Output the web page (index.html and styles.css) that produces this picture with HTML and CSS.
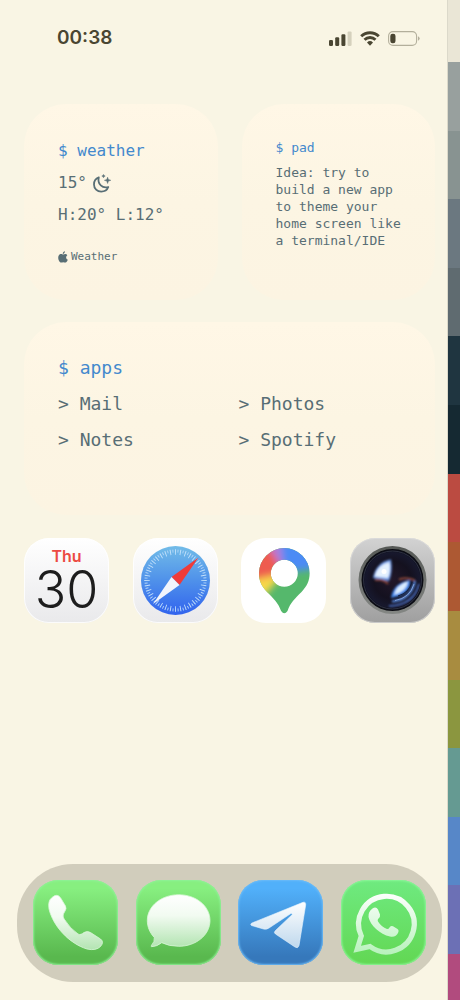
FILE: index.html
```html
<!DOCTYPE html>
<html lang="en">
<head>
<meta charset="utf-8">
<meta name="viewport" content="width=device-width, initial-scale=1">
<title>Home screen</title>
<link rel="stylesheet" href="styles.css">
</head>
<body>
<main class="screen">
  <header class="status">
    <time class="clock">00:38</time>
    <div class="indicators">
      <svg width="23" height="15" viewBox="0 0 23 15" role="img" aria-label="Signal">
        <g fill="#4a4632"><rect x="0" y="9" width="4" height="6" rx="1.2"/><rect x="6.2" y="6.3" width="4" height="8.7" rx="1.2"/><rect x="12.4" y="3.2" width="4" height="11.800" rx="1.2"/></g>
        <rect x="18.6" y="0.4" width="4" height="14.6" rx="1.2" fill="#d5d1bd"/>
      </svg>
      <svg width="20" height="15" viewBox="0 0 20 15" role="img" aria-label="Wi-Fi">
        <g fill="none" stroke="#4a4632" stroke-width="2.900"><path d="M1.200 5.300a12.500 12.500 0 0 1 17.600 0"/><path d="M4.500 8.800a7.900 7.900 0 0 1 11 0"/></g>
        <path d="M7 11.500a4.300 4.300 0 0 1 6 0L10 14.700z" fill="#4a4632"/>
      </svg>
      <svg width="32" height="15" viewBox="0 0 32 15" role="img" aria-label="Battery">
        <rect x="0.6" y="0.6" width="28" height="13.8" rx="4.4" fill="none" stroke="#b3af9b" stroke-width="1.1"/>
        <path d="M30 5.3q1.7.7 1.7 2.2T30 9.7z" fill="#b3af9b"/>
        <rect x="2.3" y="2.8" width="5.2" height="9.4" rx="2.3" fill="#4a4632"/>
      </svg>
    </div>
  </header>

  <section class="widgets">
    <article class="widget weather">
      <h2 class="prompt">$ weather</h2>
      <p class="now">15°
        <svg width="19" height="19" viewBox="0 0 19 19" aria-hidden="true">
          <path d="M5.800 3.400C2.800 4.500 1 7.200 1 10.400 1 14.600 4.200 17.600 8.200 17.600 11.500 17.600 14.200 15.900 15.300 13 9.500 14.600 4.200 10.500 5.800 3.400z" fill="none" stroke="#586e75" stroke-width="1.800" stroke-linejoin="round"/>
          <path d="M14.600 3.200l.8 2.300 2.400.8-2.400.8-.8 2.400-.8-2.400-2.400-.8 2.400-.8zM10.500.4l.5 1.200 1.200.5-1.200.5-.5 1.200-.5-1.200-1.200-.5 1.200-.5z" fill="#586e75" stroke="#586e75" stroke-width=".5"/>
        </svg>
      </p>
      <p>H:20° L:12°</p>
      <footer class="source">
        <svg width="10" height="12" viewBox="0 0 10 12" aria-hidden="true"><path fill="#586e75" d="M7 .2C7 1.6 6 2.8 4.800 2.900 4.700 1.500 5.800.4 7 .2zM9.300 4.200Q8.100 5 8.100 6.400 8.200 8 9.800 8.700 9.200 10.200 8.200 11.200C7.200 12.100 6.300 11.200 5.200 11.200S3.400 11.900 2.500 11.400C1.200 10.700.2 8.700.2 6.700.2 4.200 1.700 3 3.200 3 4.100 3 4.600 3.500 5.200 3.500S6.500 3 7.400 3Q8.600 3.100 9.300 4.200z"/></svg>
        <span>Weather</span>
      </footer>
    </article>
    <article class="widget pad">
      <h2 class="prompt">$ pad</h2>
      <p>Idea: try to<br>build a new app<br>to theme your<br>home screen like<br>a terminal/IDE</p>
    </article>
    <nav class="widget apps" aria-label="Apps">
      <h2 class="prompt">$ apps</h2>
      <a href="#mail">&gt; Mail</a>
      <a href="#photos">&gt; Photos</a>
      <a href="#notes">&gt; Notes</a>
      <a href="#spotify">&gt; Spotify</a>
    </nav>
  </section>

  <section class="icons">
    <button class="app calendar" aria-label="Calendar">
      <span class="weekday">Thu</span>
      <span class="day">30</span>
    </button>
    <button class="app safari" aria-label="Safari">
      <svg viewBox="0 0 85 85" aria-hidden="true">
        <defs><linearGradient id="sea" x2="0" y2="1"><stop stop-color="#72bce8"/><stop offset=".5" stop-color="#4f91ea"/><stop offset="1" stop-color="#3163ee"/></linearGradient></defs>
        <circle cx="42.500" cy="42.500" r="34.500" fill="url(#sea)"/>
        <circle cx="42.500" cy="42.500" r="28.500" fill="none" stroke="#c5e2fb" stroke-width="5.500" pathLength="360" stroke-dasharray="1.800 8.200" stroke-dashoffset="1"/>
        <circle cx="42.500" cy="42.500" r="29.500" fill="none" stroke="#b3d5f8" stroke-width="3" pathLength="360" stroke-dasharray="1.800 8.200" stroke-dashoffset="6"/>
        <path d="M65.500 19.500L38.500 39l8 8z" fill="#ef3b39"/>
        <path d="M20 66L38.500 39l8 8z" fill="#f2f5fc"/>
      </svg>
    </button>
    <button class="app maps" aria-label="Maps">
      <svg viewBox="0 0 85 85" aria-hidden="true">
        <defs>
          <clipPath id="pin"><path clip-rule="evenodd" d="M43.300 10A25.300 25.300 0 0 1 68.600 35.300C68.600 43 66 48 60.500 54 54 60.500 49.500 64.500 46.500 73Q43.300 77.500 40.100 73C37 64.500 32.500 60.500 26 54 20.500 48 18 43 18 35.300A25.300 25.300 0 0 1 43.300 10zM43.300 21.800a13.500 13.500 0 1 0 0 27 13.500 13.500 0 0 0 0-27z"/></clipPath>
          <filter id="blend" x="-50%" y="-50%" width="200%" height="200%"><feGaussianBlur stdDeviation="3.500"/></filter>
        </defs>
        <g clip-path="url(#pin)">
          <path d="M10 5h65v75H10z" fill="#55b86c"/>
          <g filter="url(#blend)">
            <path d="M43 35L4 40l16 22z" fill="#f8d84a"/>
            <path d="M43 35L4 44 4 14 26 4z" fill="#ee5b50"/>
            <path d="M43 35L24 2h17z" fill="#b27bd8"/>
            <path d="M43 35L39 0h41v30z" fill="#4c8bf5"/>
          </g>
        </g>
      </svg>
    </button>
    <button class="app camera" aria-label="Camera">
      <svg viewBox="0 0 85 85" aria-hidden="true">
        <defs>
          <radialGradient id="glass"><stop stop-color="#211729"/><stop offset=".6" stop-color="#14111f"/><stop offset=".88" stop-color="#17182d"/><stop offset="1" stop-color="#07080d"/></radialGradient>
          <linearGradient id="rim" x2="0" y2="1"><stop stop-color="#555855"/><stop offset="1" stop-color="#848784"/></linearGradient>
          <filter id="soft" x="-50%" y="-50%" width="200%" height="200%"><feGaussianBlur stdDeviation=".9"/></filter>
          <clipPath id="lens"><circle cx="42.500" cy="42" r="28"/></clipPath>
        </defs>
        <circle cx="42.500" cy="42" r="34" fill="url(#rim)"/>
        <circle cx="42.500" cy="42" r="31" fill="url(#glass)"/>
        <circle cx="42.500" cy="42" r="29" fill="none" stroke="#3b3f50" stroke-width=".7"/>
        <g clip-path="url(#lens)">
          <g filter="url(#soft)">
            <path d="M41 21.500Q26 24 23 40l16 3q4-9 2-21.500z" fill="#6f9be8"/>
            <path d="M39.500 24Q27 27 24.500 38.500L38 40q3-7 1.500-16z" fill="#e4f1ff"/>
            <path d="M25 42q9-1 13 4" fill="none" stroke="#8f4638" stroke-width="2"/>
            <path d="M41 60Q43 45 60 42q2 14-19 18z" fill="#4389ee"/>
            <path d="M44 57q2-10 14-14-1 10-14 14z" fill="#dceeff"/>
            <path d="M49 41.500q8-3 16 1" fill="none" stroke="#a9553f" stroke-width="1.500"/>
            <path d="M42 63.500Q61 62 65 43" fill="none" stroke="#5b92ee" stroke-width="2"/>
            <path d="M39 68Q64 67 69 46" fill="none" stroke="#4f76cc" stroke-width="1.500"/>
          </g>
          <path d="M48 58Q59 55 62 44" fill="none" stroke="#15203f" stroke-width="1"/>
          <path d="M45 62.500Q60 60 64 46" fill="none" stroke="#a9cbff" stroke-width=".6"/>
          <circle cx="34" cy="33.500" r="2.500" fill="#fff"/>
        </g>
      </svg>
    </button>
  </section>

  <nav class="dock" aria-label="Dock">
    <button class="app green" aria-label="Phone">
      <svg viewBox="0 0 85 85" aria-hidden="true">
        <defs><linearGradient id="frost" x2="0" y2="1"><stop stop-color="#fff"/><stop offset=".4" stop-color="#f2fbf1"/><stop offset="1" stop-color="#b3e4b2"/></linearGradient></defs>
        <path d="M19 17.500Q24.500 12.500 28 18.500L32.500 26Q34 28.500 31.500 32C29.500 35 30 37 31.500 39.500Q37 48.500 45 54C47 55.300 49 54 51 52.500Q54.500 50.500 57.500 52.500L67.500 59Q71.500 62 67.500 66.500 63 71 54 69C36 63.500 20 46 16 29Q14.500 21 19 17.500z" fill="url(#frost)" stroke="#dbf7d9" stroke-width=".8"/>
      </svg>
    </button>
    <button class="app green" aria-label="Messages">
      <svg viewBox="0 0 85 85" aria-hidden="true">
        <path d="M42.700 14.700C60 14.700 74 26 74 40.500S60 66.300 42.700 66.300Q33 66.300 25.700 62.700 21 66.500 15.500 66.700 14.700 66.300 15.500 65.300 19 61.500 18.300 57.500C14 53 11.300 47 11.300 40.500 11.300 26 25.500 14.700 42.700 14.700z" fill="url(#frost)" stroke="#d9f8d8" stroke-width=".8"/>
      </svg>
    </button>
    <button class="app telegram" aria-label="Telegram">
      <svg viewBox="0 0 85 85" aria-hidden="true">
        <defs><linearGradient id="plane" x2="0" y2="1"><stop stop-color="#fff"/><stop offset="1" stop-color="#bfd8ed"/></linearGradient></defs>
        <path d="M13.500 43.200L65 22.300Q68 21.500 67.700 25L61 65.500Q60 69 57 67L37.500 54Q35.300 52.500 37.500 50.500L54.300 34.500Q54 33 52.500 33.800L31 48Q28.500 49.800 25.500 49L13.500 45.500Q12 44.500 13.500 43.200z" fill="url(#plane)" stroke="#e7f5ff" stroke-width=".6"/>
      </svg>
    </button>
    <button class="app whatsapp" aria-label="WhatsApp">
      <svg viewBox="0 0 85 85" aria-hidden="true">
        <defs><linearGradient id="mint" gradientUnits="userSpaceOnUse" x1="0" y1="12" x2="0" y2="73"><stop stop-color="#fff"/><stop offset="1" stop-color="#b9f2bd"/></linearGradient></defs>
        <path d="M16.200 69.200L20.300 56A27.800 27.800 0 1 1 29 66.500z" fill="none" stroke="url(#mint)" stroke-width="5.200"/>
        <path d="M31.500 28.500Q35 26 37 29.500L39 34.500Q39.500 36.500 37.500 38.500 36 40 37 41.500 40.500 47 46 49 47.500 49.300 48.500 47.500 50 45.500 52 46.300L56.500 49Q58.300 50.200 57 53 55 57.500 49 56.500C39 54.500 29 45 27.500 37Q27 31.500 31.500 28.500z" fill="url(#mint)"/>
      </svg>
    </button>
  </nav>
</main>
<div class="palette" aria-hidden="true">
  <i class="swatch base3"></i><i class="swatch base1"></i><i class="swatch base0"></i><i class="swatch base00"></i><i class="swatch base01"></i><i class="swatch base02"></i><i class="swatch base03"></i><i class="swatch red"></i><i class="swatch orange"></i><i class="swatch yellow"></i><i class="swatch lime"></i><i class="swatch cyan"></i><i class="swatch blue"></i><i class="swatch violet"></i><i class="swatch magenta"></i>
</div>
</body>
</html>
```
FILE: styles.css
```css
* { box-sizing: border-box; }
body {
  margin: 0;
  min-height: 100vh;
  display: grid;
  grid-template-columns: 1fr 13px;
  background: #f9f5e4;
  color: #586e75;
  font-family: "DejaVu Sans Mono", monospace;
}
h2, p { margin: 0; font: inherit; }
svg { display: block; }
a { color: inherit; text-decoration: none; }
button { border: 0; padding: 0; font: inherit; cursor: pointer; }

.screen { display: flex; flex-direction: column; min-width: 0; }

.status {
  display: flex;
  justify-content: space-between;
  align-items: center;
  height: 76px;
  padding: 0 27px 0 57px;
  color: #4a4632;
}
.clock { font: 600 19px/24px Inter, sans-serif; }
.indicators { display: flex; gap: 8px; }

.widgets {
  display: grid;
  grid-template-columns: 1fr 1fr;
  gap: 22px 24px;
  padding: 28px 12px 0 24px;
}
.widget {
  border-radius: 42px;
  background: linear-gradient(#fff7e6, #fcf5e3 50%, #fcf4e2);
}
.prompt { color: #4389cd; }

.weather {
  min-height: 196px;
  padding: 31px 0 0 34px;
  font-size: 16px;
  line-height: 32px;
}
.now { display: flex; align-items: center; gap: 6px; }
.source {
  display: flex;
  align-items: center;
  gap: 3px;
  margin-top: 18px;
  font-size: 11px;
  line-height: 16px;
}

.pad {
  padding: 35px 0 0 34px;
  font-size: 13px;
  line-height: 17px;
  white-space: nowrap;
}
.pad .prompt { margin-bottom: 8px; }

.apps {
  grid-column: 1 / -1;
  display: grid;
  grid-template-columns: 1fr 1fr;
  align-content: start;
  min-height: 193px;
  padding: 28px 16px 0 34px;
  font-size: 18px;
  line-height: 36px;
}
.apps .prompt { grid-column: 1 / -1; }

.icons {
  display: flex;
  justify-content: space-between;
  padding: 23px 12px 24px 24px;
}
.app {
  width: 85px;
  height: 85px;
  border-radius: 25px;
  overflow: hidden;
}
.calendar, .safari {
  background: linear-gradient(#fff, #e9e9eb);
  box-shadow: inset 0 0 0 1px #ffffffcc;
}
.calendar {
  display: flex;
  flex-direction: column;
  align-items: center;
  justify-content: center;
  font-family: Inter, sans-serif;
}
.weekday { color: #ec4a43; font-size: 16px; font-weight: 600; line-height: 18px; }
.day { color: #1d1d1d; font-size: 52px; font-weight: 300; line-height: 49px; }
.maps { background: #fff; }
.camera {
  background: linear-gradient(#d2d2d2, #9f9f9f);
  box-shadow: inset 0 0 0 1px #dededeaa;
}

.dock {
  display: flex;
  justify-content: space-between;
  margin: auto 5px 18px 17px;
  padding: 16px 16px 17px;
  border-radius: 56px;
  background: #d1cdbc;
}
.green {
  background: linear-gradient(#87ef80 10%, #59b84e 90%);
  box-shadow: inset 0 0 2px 1px #8ff298;
}
.telegram {
  background: linear-gradient(#51b0fa 10%, #3678bb 90%);
  box-shadow: inset 0 0 2px 1px #6cbcf8;
}
.whatsapp {
  background: linear-gradient(#6fea80, #62d753);
  box-shadow: inset 0 0 2px 1px #8cf79a;
}

.palette { display: flex; flex-direction: column; border-left: 1px solid #dcd9ca; }
.swatch { flex: 686 0 0; }
.base3 { flex-grow: 620; background: #eae6d6; }
.base1 { background: #98a09e; }
.base0 { background: #889391; }
.base00 { background: #6b7880; }
.base01 { background: #5f6b70; }
.base02 { background: #1f3540; }
.base03 { background: #152932; }
.red { background: #bb4b41; }
.orange { background: #ad5933; }
.yellow { background: #a88c40; }
.lime { background: #8b963f; }
.cyan { background: #659a92; }
.blue { background: #5787c8; }
.violet { background: #6c70b5; }
.magenta { flex-grow: 460; background: #b14b7e; }
```
